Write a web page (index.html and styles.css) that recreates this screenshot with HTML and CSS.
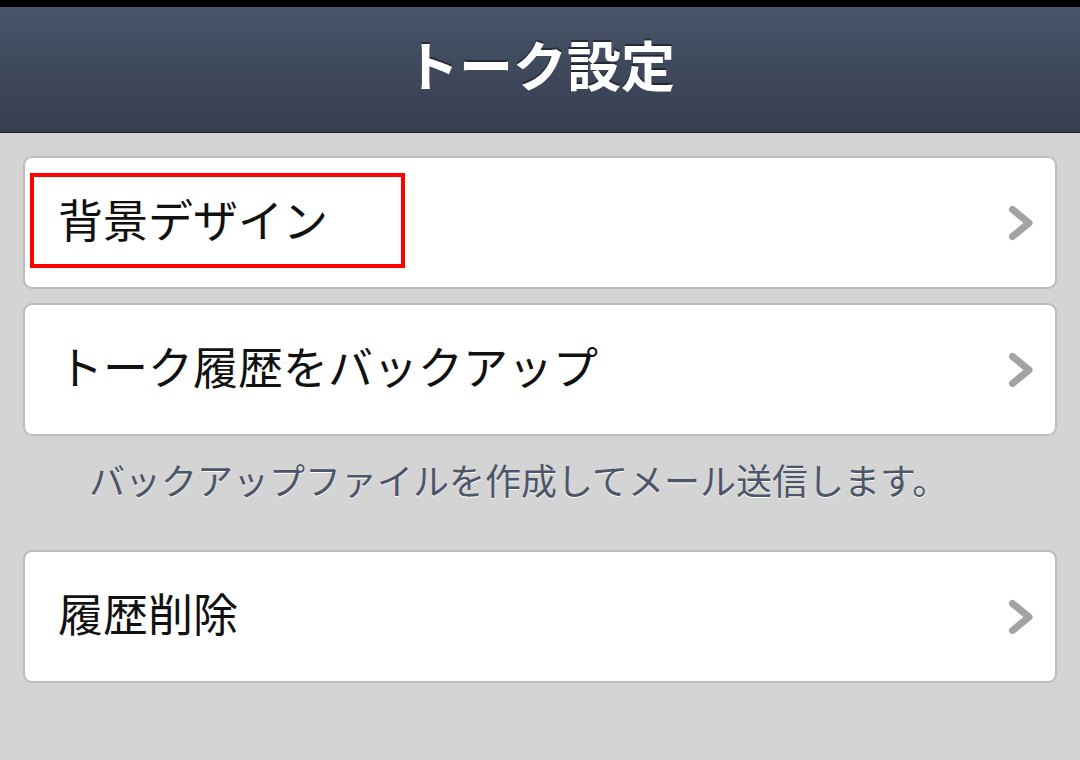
FILE: index.html
```html
<!DOCTYPE html>
<html lang="ja">
<head>
<meta charset="utf-8">
<title>トーク設定</title>
<link rel="stylesheet" href="styles.css">
</head>
<body>
<div class="statusbar"></div>
<header class="navbar">
  <h1 class="title">トーク設定</h1>
</header>
<main class="content">
  <div class="card">
    <span class="label">背景デザイン</span>
    <svg class="chevron" width="26" height="36" viewBox="0 0 26 36"><polyline points="4.5,4.5 21,18 4.5,31.5" fill="none" stroke="#a3a3a3" stroke-width="7" stroke-linecap="round" stroke-linejoin="round"/></svg>
    <div class="highlight"></div>
  </div>
  <div class="card card-gap">
    <span class="label">トーク履歴をバックアップ</span>
    <svg class="chevron" width="26" height="36" viewBox="0 0 26 36"><polyline points="4.5,4.5 21,18 4.5,31.5" fill="none" stroke="#a3a3a3" stroke-width="7" stroke-linecap="round" stroke-linejoin="round"/></svg>
  </div>
  <p class="note">バックアップファイルを作成してメール送信します。</p>
  <div class="card">
    <span class="label">履歴削除</span>
    <svg class="chevron" width="26" height="36" viewBox="0 0 26 36"><polyline points="4.5,4.5 21,18 4.5,31.5" fill="none" stroke="#a3a3a3" stroke-width="7" stroke-linecap="round" stroke-linejoin="round"/></svg>
  </div>
</main>
</body>
</html>
```
FILE: styles.css
```css
html, body {
  margin: 0;
  padding: 0;
}
body {
  background: #d4d4d4;
  font-family: "Noto Sans CJK JP", "Noto Sans", sans-serif;
  width: 1080px;
  height: 760px;
  overflow: hidden;
}
.statusbar {
  height: 7px;
  background: #000;
}
.navbar {
  height: 126px;
  background: linear-gradient(to bottom, #4b556a 0%, #404a5d 45%, #363e4f 100%);
  border-bottom: 1px solid #1c2027;
  display: flex;
  align-items: center;
  justify-content: center;
  box-sizing: border-box;
}
.title {
  margin: 0 0 12px 0;
  color: #fff;
  font-size: 54px;
  font-weight: 700;
  line-height: 1;
  text-shadow: 0 -2px 0 rgba(0, 0, 0, 0.45);
}
.content {
  padding: 23px 23px 0 23px;
}
.card {
  position: relative;
  height: 133px;
  box-sizing: border-box;
  background: #fff;
  border: 2px solid #bcbcbc;
  border-radius: 9px;
  display: flex;
  align-items: center;
  justify-content: space-between;
  padding: 0 21px 0 33px;
}
.card-gap {
  margin-top: 14px;
}
.label {
  font-size: 45px;
  color: #111;
  line-height: 1;
  margin-bottom: 8px;
}
.chevron {
  display: block;
  flex: none;
}
.highlight {
  position: absolute;
  left: 5px;
  top: 15px;
  width: 375px;
  height: 95px;
  box-sizing: border-box;
  border: 4px solid #ff0000;
}
.note {
  margin: 20px 0 48px 0;
  padding-left: 66px;
  font-size: 36px;
  line-height: 46px;
  color: #4d5569;
  text-shadow: 0 1px 0 #fff;
}
```
